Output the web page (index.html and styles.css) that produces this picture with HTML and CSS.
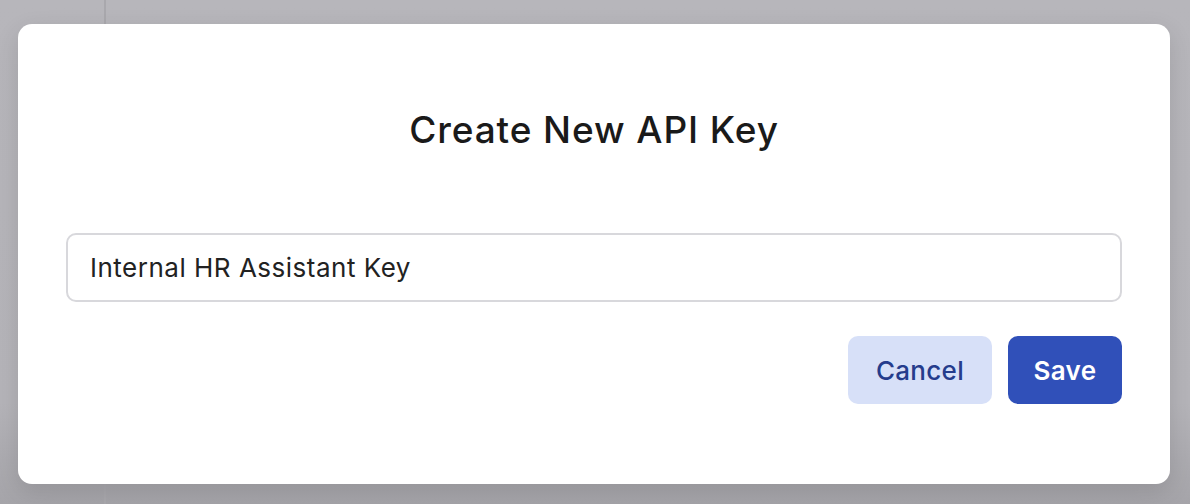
FILE: index.html
```html
<!DOCTYPE html>
<html>
<head>
<meta charset="utf-8">
<link rel="stylesheet" href="styles.css">
</head>
<body>
<div class="backdrop">
  <div class="modal">
    <h2 class="modal-title">Create New API Key</h2>
    <div class="field">Internal HR Assistant Key</div>
    <div class="actions">
      <button class="btn btn-cancel">Cancel</button>
      <button class="btn btn-save">Save</button>
    </div>
  </div>
</div>
</body>
</html>
```

FILE: styles.css
```css
html, body {
  margin: 0;
  padding: 0;
  width: 1190px;
  height: 504px;
  overflow: hidden;
}
body {
  font-family: Inter, "Noto Sans", sans-serif;
  background:
    linear-gradient(to right, transparent 104px, #a9a8ad 104px, #a9a8ad 106px, transparent 106px),
    linear-gradient(to bottom, #b7b6bb 0%, #b5b4b9 80%, #a5a4a9 100%);
}
.backdrop {
  padding: 24px 20px 20px 18px;
}
.modal {
  width: 1152px;
  height: 460px;
  box-sizing: border-box;
  background: #fff;
  border-radius: 14px;
  padding: 84px 48px 0 48px;
  box-shadow: 0 8px 24px rgba(0,0,0,0.12);
}
.modal-title {
  margin: 0;
  text-align: center;
  font-size: 37px;
  font-weight: 500;
  line-height: 44px;
  color: #1a1a1a;
  letter-spacing: 0.9px;
}
.field {
  margin-top: 81px;
  height: 69px;
  box-sizing: border-box;
  border: 2px solid #d8d8dc;
  border-radius: 10px;
  padding: 0 22px;
  display: flex;
  align-items: center;
  font-size: 26px;
  letter-spacing: 0.5px;
  color: #222;
}
.actions {
  margin-top: 34px;
  display: flex;
  justify-content: flex-end;
  gap: 16px;
}
.btn {
  font-family: inherit;
  border: none;
  border-radius: 10px;
  height: 68px;
  font-size: 26px;
  font-weight: 500;
  letter-spacing: 0.3px;
  padding: 0;
}
.btn-cancel {
  width: 144px;
  background: #d7e0f8;
  color: #253c8c;
}
.btn-save {
  width: 114px;
  background: #3050b9;
  color: #fff;
  font-weight: 600;
}
```
